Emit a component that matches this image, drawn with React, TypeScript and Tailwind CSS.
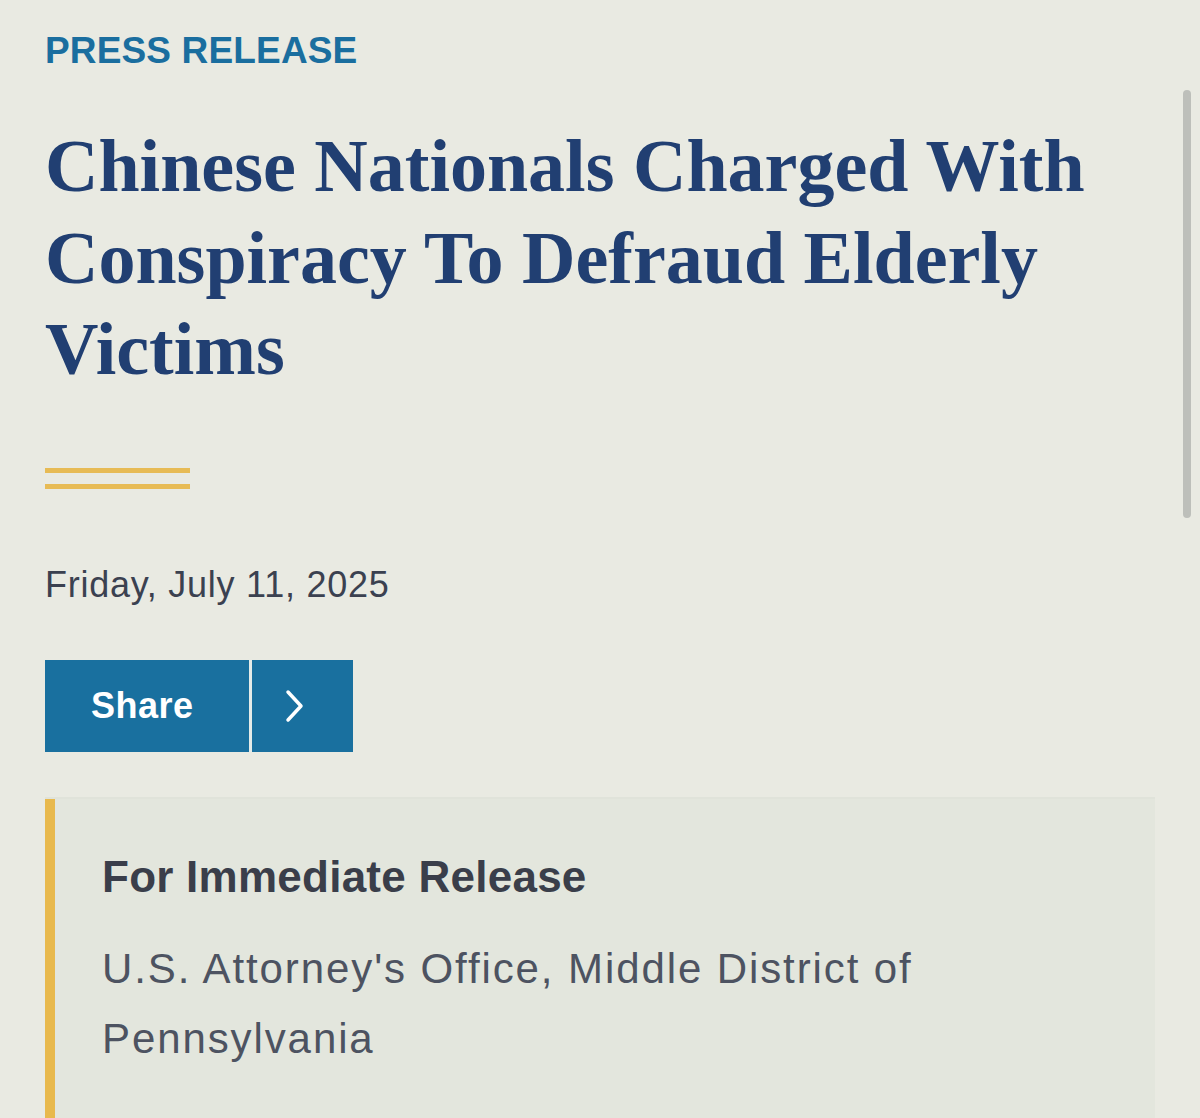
import React from "react";

export default function App() {
  const sans = { fontFamily: '"Liberation Sans", Arial, sans-serif' };
  return (
    <div
      className="relative h-[1118px] w-full overflow-hidden bg-[#e9eae2]"
      style={sans}
    >
      <div className="pl-[45px] pr-[45px] pt-[29px]">
        <div className="text-[37px] leading-[44px] font-bold tracking-[0.15px] text-[#1a6e9f]">
          PRESS RELEASE
        </div>
        <h1
          className="mt-[48px] text-[74px] leading-[91.5px] font-bold text-[#213f72]"
          style={{ fontFamily: '"Liberation Serif", "Times New Roman", serif' }}
        >
          Chinese Nationals Charged With
          <br />
          Conspiracy To Defraud Elderly
          <br />
          Victims
        </h1>
        <div className="mt-[72px] flex flex-col gap-[11px]">
          <div className="h-[5px] w-[145px] bg-[#e7bb55]" />
          <div className="h-[5px] w-[145px] bg-[#e7bb55]" />
        </div>
        <div className="mt-[74px] text-[36px] leading-[44px] tracking-[0.75px] text-[#3b4150]">
          Friday, July 11, 2025
        </div>
        <div className="mt-[53px] flex h-[92px] w-[308px]">
          <div className="flex h-full w-[204px] items-center bg-[#19709f] pl-[46px] text-[36px] font-bold tracking-[0.5px] text-white">
            Share
          </div>
          <div className="h-full w-[3px] bg-[#e4ebe8]" />
          <div className="flex h-full w-[101px] items-center justify-center bg-[#19709f] pr-4">
            <svg width="22" height="34" viewBox="0 0 22 34" fill="none">
              <polyline
                points="4,3 17,17 4,31"
                stroke="white"
                strokeWidth="3.5"
                strokeLinecap="round"
                strokeLinejoin="round"
              />
            </svg>
          </div>
        </div>
        <div className="mt-[45px] flex w-[1110px] border-t-2 border-[#e0e3da] bg-[#e3e6dd]">
          <div className="w-[10px] shrink-0 bg-[#e8b94d]" />
          <div className="pl-[47px] pt-[52px] pb-[60px]">
            <div className="text-[44px] leading-[52px] font-bold tracking-[0.25px] text-[#3a3e4a]">
              For Immediate Release
            </div>
            <div className="mt-[31px] text-[42px] leading-[70px] tracking-[1.9px] text-[#4d5361]">
              U.S. Attorney's Office, Middle District of
              <br />
              Pennsylvania
            </div>
          </div>
        </div>
      </div>
      <div className="absolute left-[1183px] top-[90px] h-[428px] w-[8px] rounded-full bg-[#bdbfba]" />
    </div>
  );
}
